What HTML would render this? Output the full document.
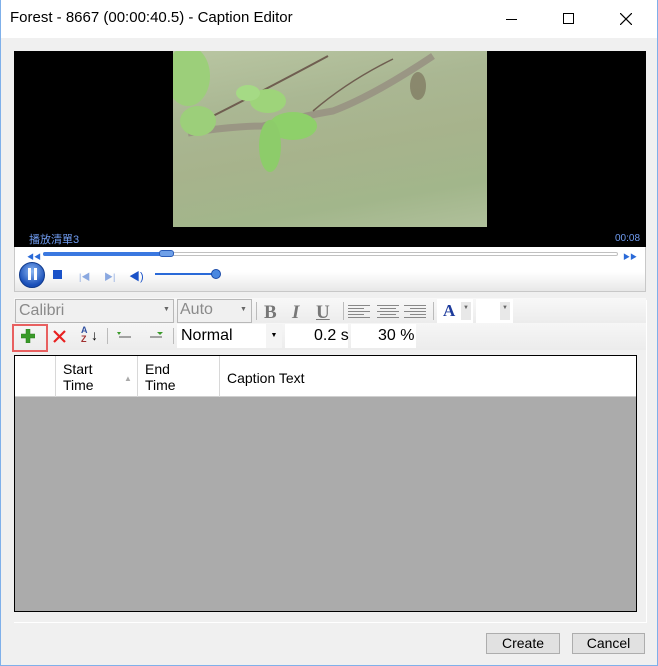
<!DOCTYPE html>
<html><head><meta charset="utf-8"><style>
*{margin:0;padding:0;box-sizing:border-box}
body{width:658px;height:666px;overflow:hidden;background:#f0f0f0;font-family:"Liberation Sans","Noto Sans CJK TC",sans-serif;position:relative}
.a{position:absolute}
</style></head><body>
<div class="a" style="left:0;top:0;width:658px;height:666px;border:1px solid #7fb0ea;border-top:none"></div>
<div class="a" style="left:1px;top:0;width:656px;height:38px;background:#fff"></div>
<div class="a" style="left:10px;top:9px;font-size:15px;color:#000">Forest - 8667 (00:00:40.5) - Caption Editor</div>
<div class="a" style="left:506px;top:19px;width:11px;height:1px;background:#000"></div>
<div class="a" style="left:563px;top:13px;width:11px;height:11px;border:1px solid #000"></div>
<svg class="a" style="left:620px;top:13px" width="12" height="12"><path d="M0 0L12 12M12 0L0 12" stroke="#000" stroke-width="1.2"/></svg>

<div class="a" style="left:14px;top:51px;width:632px;height:196px;background:#000"></div>
<div class="a" style="left:173px;top:51px;width:314px;height:176px;background:linear-gradient(170deg,#b9c6a2 0%,#aab793 30%,#a7b38c 55%,#a2b68b 80%,#b0c09b 100%);overflow:hidden">
<svg width="314" height="176"><path d="M15 82 Q60 75 90 75 Q130 65 160 60 Q200 45 260 5" stroke="#9a9684" stroke-width="7" fill="none"/><path d="M30 70 Q90 40 155 5" stroke="#6f5e50" stroke-width="2" fill="none"/><path d="M140 60 Q175 30 220 8" stroke="#6f5e50" stroke-width="1.5" fill="none"/><ellipse cx="120" cy="75" rx="24" ry="14" fill="#8ed06a"/><ellipse cx="95" cy="50" rx="18" ry="12" fill="#9ed47a"/><ellipse cx="75" cy="42" rx="12" ry="8" fill="#a5da85"/><ellipse cx="97" cy="95" rx="11" ry="26" fill="#8dcc6a"/><ellipse cx="15" cy="25" rx="22" ry="30" fill="#9ccf7a"/><ellipse cx="25" cy="70" rx="18" ry="15" fill="#9ccf7a"/><ellipse cx="245" cy="35" rx="8" ry="14" fill="#6a5a48" opacity=".5"/></svg></div>
<div class="a" style="left:29px;top:231px;font-size:11px;color:#6f9bf0">播放清單3</div>
<div class="a" style="left:615px;top:233px;font-size:10px;color:#6f9bf0">00:08</div>

<div class="a" style="left:14px;top:247px;width:632px;height:45px;border:1px solid #c8c8c8;border-top:none;background:linear-gradient(#fff 0,#fff 25px,#e6e6e6 45px)"></div>
<div class="a" style="left:27px;top:252px;font-size:7px;color:#2a6ad8">◀◀</div>
<div class="a" style="left:43px;top:252px;width:575px;height:4px;border:1px solid #c0c0c0;border-radius:2px"></div>
<div class="a" style="left:43px;top:252px;width:122px;height:4px;background:#3a78e0;border-radius:2px"></div>
<div class="a" style="left:159px;top:250px;width:15px;height:7px;background:#6fa0e8;border:1px solid #2a5cb8;border-radius:3px"></div>
<div class="a" style="left:623px;top:252px;font-size:7px;color:#2a6ad8">▶▶</div>
<div class="a" style="left:19px;top:262px;width:26px;height:26px;border-radius:50%;background:radial-gradient(circle at 50% 35%,#8cb8f4,#1a4fb8 70%);border:1px solid #103a8c"></div>
<div class="a" style="left:28px;top:268px;width:3px;height:12px;background:#fff"></div>
<div class="a" style="left:34px;top:268px;width:3px;height:12px;background:#fff"></div>
<div class="a" style="left:53px;top:270px;width:9px;height:9px;background:#1a52c8"></div>
<div class="a" style="left:79px;top:270px;font-size:9px;color:#8aa8e0">|◀</div>
<div class="a" style="left:104px;top:270px;font-size:9px;color:#8aa8e0">▶|</div>
<div class="a" style="left:129px;top:268px;font-size:11px;color:#1a52c8">◀)</div>
<div class="a" style="left:155px;top:273px;width:62px;height:2px;background:#2a6ad8"></div>
<div class="a" style="left:211px;top:269px;width:10px;height:10px;border-radius:50%;background:#4a88e0;border:1px solid #1a4aa8"></div>

<div class="a" style="left:14px;top:298px;width:632px;height:25px;background:linear-gradient(#f8f8f8,#ececec)"></div>
<div class="a" style="left:15px;top:299px;width:159px;height:24px;border:1px solid #b8b8b8;background:#f0f0f0"></div>
<div class="a" style="left:19px;top:302px;font-size:16px;color:#8a8a8a">Calibri</div>
<div class="a" style="left:163px;top:306px;font-size:7px;color:#666">▼</div>
<div class="a" style="left:177px;top:299px;width:75px;height:24px;border:1px solid #b8b8b8;background:#f0f0f0"></div>
<div class="a" style="left:180px;top:301px;font-size:16px;color:#8a8a8a">Auto</div>
<div class="a" style="left:240px;top:306px;font-size:7px;color:#666">▼</div>
<div class="a" style="left:256px;top:302px;width:1px;height:18px;background:#bbb"></div>
<div class="a" style="left:264px;top:302px;font-size:19px;font-weight:bold;color:#777;font-family:'Liberation Serif',serif">B</div>
<div class="a" style="left:292px;top:302px;font-size:19px;font-style:italic;font-weight:bold;color:#777;font-family:'Liberation Serif',serif">I</div>
<div class="a" style="left:316px;top:302px;font-size:19px;font-weight:bold;color:#777;text-decoration:underline;font-family:'Liberation Serif',serif">U</div>
<div class="a" style="left:343px;top:302px;width:1px;height:18px;background:#bbb"></div>
<svg class="a" style="left:348px;top:304px" width="80" height="14"><g stroke="#888" stroke-width="1"><path d="M0 1.5H22M0 4.5H16M0 7.5H22M0 10.5H16M0 13.5H22"/><path d="M29 1.5H51M32 4.5H48M29 7.5H51M32 10.5H48M29 13.5H51"/><path d="M56 1.5H78M62 4.5H78M56 7.5H78M62 10.5H78M56 13.5H78"/></g></svg>
<div class="a" style="left:433px;top:302px;width:1px;height:18px;background:#bbb"></div>
<div class="a" style="left:437px;top:299px;width:36px;height:24px;background:#fff"></div>
<div class="a" style="left:443px;top:301px;font-size:17px;font-weight:bold;color:#1e3c9c;font-family:'Liberation Serif',serif">A</div>
<div class="a" style="left:461px;top:302px;width:10px;height:18px;background:#e8e8e8;font-size:6px;color:#666;text-align:center;line-height:12px">▼</div>
<div class="a" style="left:476px;top:299px;width:37px;height:24px;background:#fff"></div>
<div class="a" style="left:500px;top:302px;width:10px;height:18px;background:#e8e8e8;font-size:6px;color:#666;text-align:center;line-height:12px">▼</div>

<div class="a" style="left:14px;top:323px;width:632px;height:27px;background:linear-gradient(#f6f6f6,#ececec)"></div>
<div class="a" style="left:12px;top:324px;width:36px;height:28px;border:2px solid #e86060"></div>
<svg class="a" style="left:21px;top:329px" width="14" height="14"><path d="M5 0H9V5H14V9H9V14H5V9H0V5H5Z" fill="#3a9a2a" stroke="#2a7a1a" stroke-width=".5"/></svg>
<svg class="a" style="left:53px;top:330px" width="13" height="13"><path d="M1 1L12 12M12 1L1 12" stroke="#e82020" stroke-width="2.2"/></svg>
<div class="a" style="left:81px;top:326px;font-size:9px;line-height:9px;color:#3050a0;font-weight:bold">A<br><span style="color:#a03030">Z</span></div>
<div class="a" style="left:91px;top:327px;font-size:14px;color:#000">↓</div>
<div class="a" style="left:107px;top:328px;width:1px;height:16px;background:#bbb"></div>
<svg class="a" style="left:116px;top:331px" width="16" height="10"><path d="M1 1L5 1L3 4Z" fill="#3a9a2a"/><path d="M3 6H15" stroke="#888" stroke-width="1.5"/></svg>
<svg class="a" style="left:149px;top:331px" width="16" height="10"><path d="M8 1L14 1L11 4Z" fill="#3a9a2a"/><path d="M1 6H13" stroke="#888" stroke-width="1.5"/></svg>
<div class="a" style="left:173px;top:328px;width:1px;height:16px;background:#bbb"></div>
<div class="a" style="left:177px;top:324px;width:105px;height:24px;background:#fff"></div>
<div class="a" style="left:181px;top:327px;font-size:16px;color:#000">Normal</div>
<div class="a" style="left:266px;top:324px;width:16px;height:24px;background:#f4f4f4;font-size:7px;line-height:24px;text-align:center">▼</div>
<div class="a" style="left:285px;top:324px;width:63px;height:24px;background:#fff"></div>
<div class="a" style="left:314px;top:327px;font-size:16px">0.2 s</div>
<div class="a" style="left:351px;top:324px;width:65px;height:24px;background:#fff"></div>
<div class="a" style="left:378px;top:327px;font-size:16px">30 %</div>

<div class="a" style="left:14px;top:355px;width:623px;height:257px;border:1px solid #000;background:#ababab"></div>
<div class="a" style="left:15px;top:356px;width:621px;height:41px;background:#fff;border-bottom:1px solid #d0d0d0"></div>
<div class="a" style="left:55px;top:356px;width:1px;height:41px;background:#d8d8d8"></div>
<div class="a" style="left:137px;top:356px;width:1px;height:41px;background:#d8d8d8"></div>
<div class="a" style="left:219px;top:356px;width:1px;height:41px;background:#d8d8d8"></div>
<div class="a" style="left:63px;top:361px;font-size:14px;line-height:16px">Start<br>Time</div>
<div class="a" style="left:124px;top:374px;font-size:8px;color:#aaa">▲</div>
<div class="a" style="left:145px;top:361px;font-size:14px;line-height:16px">End<br>Time</div>
<div class="a" style="left:227px;top:370px;font-size:14px">Caption Text</div>

<div class="a" style="left:14px;top:622px;width:632px;height:1px;background:#fff"></div>
<div class="a" style="left:646px;top:300px;width:1px;height:323px;background:#fff"></div>
<div class="a" style="left:486px;top:633px;width:74px;height:21px;border:1px solid #adadad;background:#e1e1e1;font-size:14px;text-align:center;line-height:19px">Create</div>
<div class="a" style="left:572px;top:633px;width:73px;height:21px;border:1px solid #adadad;background:#e1e1e1;font-size:14px;text-align:center;line-height:19px">Cancel</div>
</body></html>
